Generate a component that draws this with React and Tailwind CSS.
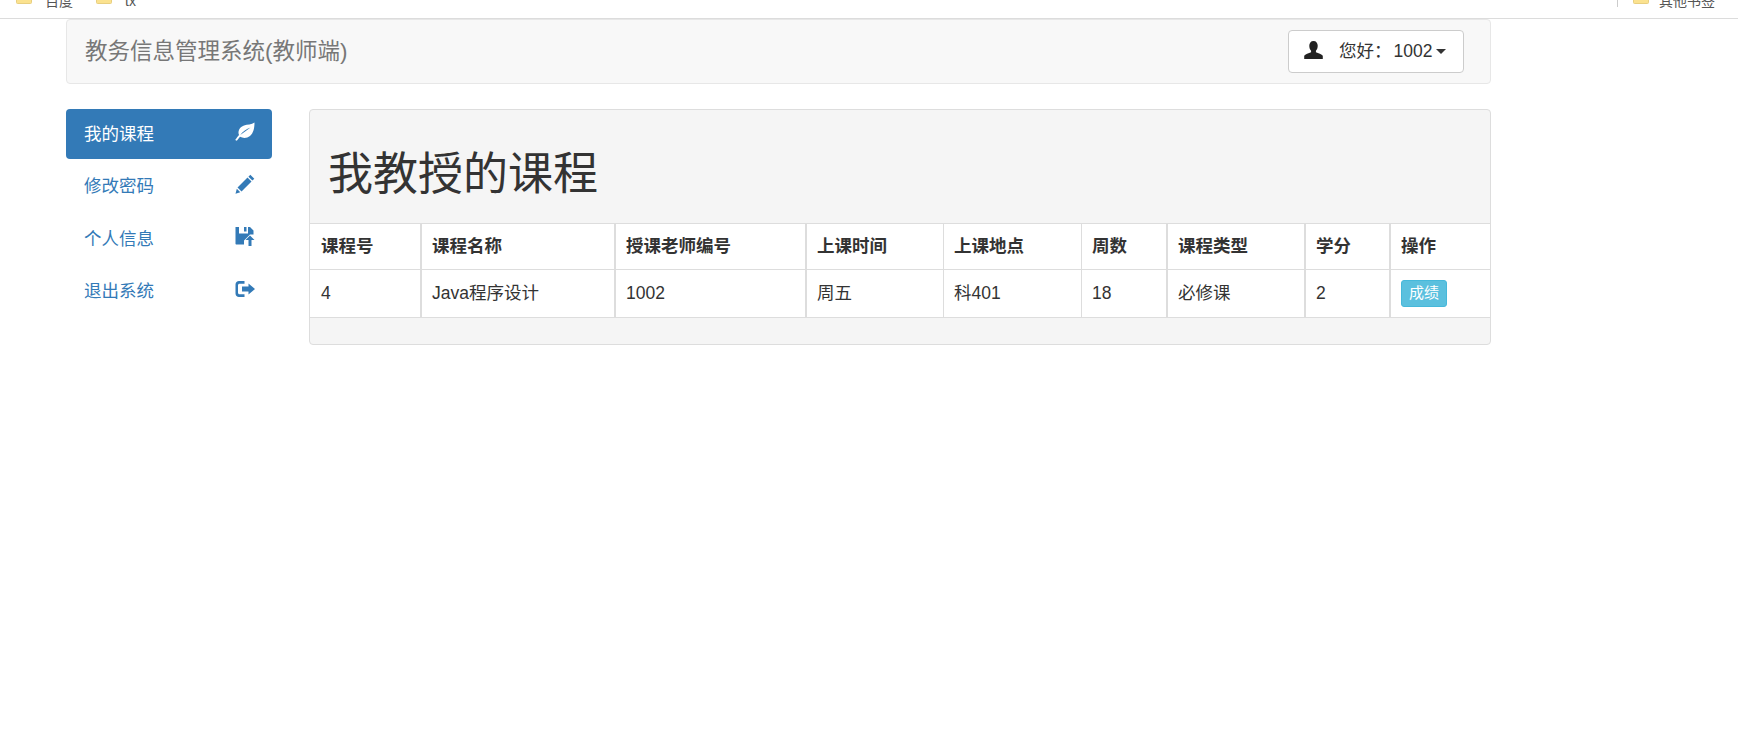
const FONT = "font-['Liberation_Sans','Noto_Sans_CJK_SC',sans-serif]";

const Folder = () => (
  <svg width="16" height="12" viewBox="0 0 16 12" className="block">
    <rect x="0.5" y="-6" width="15" height="13.5" rx="1" fill="#fbe28f" stroke="#e8cf80" />
  </svg>
);

const Leaf = () => (
  <svg width="20" height="20" viewBox="0 0 20 20" fill="currentColor">
    <path fillRule="evenodd" d="M19.500 .5C19.500 6 18.500 11 15 14 11.800 16.500 8 16.300 5 14.800L1.800 18.800.2 18C1.800 15.700 3 14.200 4 13 2.400 9 4.800 4.800 9 3.400 12.500 2.300 16.500 2.800 19.500 .5ZM15.500 5.400C11.500 6.800 7.800 9.300 5.200 13 8.800 10.300 12.200 7.900 15.500 5.400Z" />
  </svg>
);

const Pencil = () => (
  <svg width="20" height="20" viewBox="0 0 20 20" fill="currentColor">
    <path d="M15.300 .8 19.300 4.700 17.400 6.600 13.400 2.700ZM12.500 3.600 16.500 7.500 6.500 17.500 2.500 13.600ZM1.800 14.800 5.300 18.300.5 19.800Z" />
  </svg>
);

const SaveFile = () => (
  <svg width="20" height="21" viewBox="0 0 20 21" fill="currentColor">
    <path fillRule="evenodd" d="M.5 1H4V7.500H13V1H15L18.500 4.500V8.500H15L9 14.500V18.500H1.500C.900 18.500 .5 18.100 .5 17.500ZM9 1H11.500V5.500H9Z" />
    <path d="M15 9.500 19.500 14H16.500V20H13.500V14H10.500Z" />
  </svg>
);

const LogOut = () => (
  <svg width="20" height="20" viewBox="0 0 20 20" fill="currentColor">
    <path d="M4 2H9.500V4.700H4.500C3.700 4.700 3 5.400 3 6.200V13.800C3 14.600 3.700 15.300 4.500 15.300H9.500V18H4C2 18 .5 16.500 .5 14.500V5.500C.5 3.500 2 2 4 2Z" />
    <path d="M13.500 4.500 20 10 13.500 15.500V12.500H7V7.500H13.500Z" />
  </svg>
);

const User = () => (
  <svg width="19" height="19" viewBox="0 0 18 18" fill="currentColor">
    <path d="M9 0C11.600 0 13 2 13 4.500 13 6.500 12.300 8.200 11.300 9.300V10.600C13.500 11.400 17 12.500 17.800 14V17H.2V14C1 12.500 4.500 11.400 6.700 10.600V9.300C5.700 8.200 5 6.500 5 4.500 5 2 6.400 0 9 0Z" />
  </svg>
);

const NAV = [
  { label: "我的课程", Icon: Leaf, active: true },
  { label: "修改密码", Icon: Pencil },
  { label: "个人信息", Icon: SaveFile },
  { label: "退出系统", Icon: LogOut },
];

const COLUMNS = [
  { head: "课程号", cell: "4", w: "w-[112px] pl-[11px]", thick: true },
  { head: "课程名称", cell: "Java程序设计", w: "w-[194px] pl-[10px]", thick: true },
  { head: "授课老师编号", cell: "1002", w: "w-[191px] pl-[10px]", thick: true },
  { head: "上课时间", cell: "周五", w: "w-[137px] pl-[10px]" },
  { head: "上课地点", cell: "科401", w: "w-[138px] pl-[10px]" },
  { head: "周数", cell: "18", w: "w-[86px] pl-[10px]", thick: true },
  { head: "课程类型", cell: "必修课", w: "w-[138px] pl-[10px]", thick: true },
  { head: "学分", cell: "2", w: "w-[85px] pl-[10px]", thick: true },
];

function Cell({ col, bold, children }) {
  return (
    <div
      className={`${col.w} shrink-0 flex items-center border-r-[#dddddd] ${col.thick ? "border-r-2" : "border-r"} ${bold ? "font-bold" : ""}`}
    >
      {children}
    </div>
  );
}

export default function App() {
  return (
    <div className={`${FONT} h-[746px] bg-white text-[#333333] text-[17.5px] overflow-hidden`}>
      <div className="h-[19px] border-b border-b-[#dcdcdc] flex items-start justify-between overflow-hidden text-[14px] text-[#555555]">
        <div className="flex items-start pl-[16px] -mt-[4px]">
          <Folder />
          <span className="ml-[13px] -mt-[5px]">百度</span>
          <div className="ml-[23px]"><Folder /></div>
          <span className="ml-[13px] -mt-[5px]">tx</span>
        </div>
        <div className="flex items-start pr-[23px] -mt-[4px]">
          <div className="w-px h-[11px] bg-[#cccccc] mr-[15px]" />
          <Folder />
          <span className="ml-[10px] -mt-[5px]">其他书签</span>
        </div>
      </div>

      <div className="ml-[66px] w-[1425px] h-[65px] bg-[#f8f8f8] border border-[#e7e7e7] rounded-[4px] flex items-center justify-between pl-[18px] pr-[26px]">
        <span className="text-[22.5px] text-[#777777]">教务信息管理系统(教师端)</span>
        <div className="w-[176px] h-[43px] bg-white border border-[#cccccc] rounded-[4px] flex items-center pl-[15px] text-[#333333]">
          <span className="text-[#222222] flex -mt-[2px]"><User /></span>
          <span className="ml-[16px]">您好：<span className="ml-[2px]">1002</span></span>
          <span className="ml-[4px] w-0 h-0 border-x-[5px] border-x-transparent border-t-[5px] border-t-[#333333]" />
        </div>
      </div>

      <div className="ml-[66px] mt-[25px] flex items-start">
        <nav className="w-[206px] flex flex-col gap-[2.5px]">
          {NAV.map(({ label, Icon, active }) => (
            <div
              key={label}
              className={`h-[50px] rounded-[4px] flex items-center justify-between pl-[18px] pr-[17px] ${active ? "bg-[#337ab7] text-white" : "text-[#337ab7]"}`}
            >
              <span>{label}</span>
              <span className="flex mb-[5px]"><Icon /></span>
            </div>
          ))}
        </nav>

        <div className="ml-[37px] w-[1182px] h-[236px] bg-[#f5f5f5] border border-[#dddddd] rounded-[4px] overflow-hidden flex flex-col">
          <div className="h-[113px] shrink-0 flex items-center pl-[18px] pt-[16px] text-[45px] leading-none text-[#333333]">
            我教授的课程
          </div>
          <div className="bg-white border-t border-t-[#dddddd]">
            <div className="h-[46px] flex border-b border-b-[#dddddd]">
              {COLUMNS.map((c) => (
                <Cell key={c.head} col={c} bold>{c.head}</Cell>
              ))}
              <div className="flex-1 pl-[10px] flex items-center font-bold">操作</div>
            </div>
            <div className="h-[48px] flex border-b border-b-[#dddddd]">
              {COLUMNS.map((c) => (
                <Cell key={c.head} col={c}>{c.cell}</Cell>
              ))}
              <div className="flex-1 pl-[10px] flex items-center">
                <span className="w-[46px] h-[27px] bg-[#5bc0de] border border-[#46b8da] rounded-[3px] text-white text-[15px] flex items-center justify-center">成绩</span>
              </div>
            </div>
          </div>
        </div>
      </div>
    </div>
  );
}
